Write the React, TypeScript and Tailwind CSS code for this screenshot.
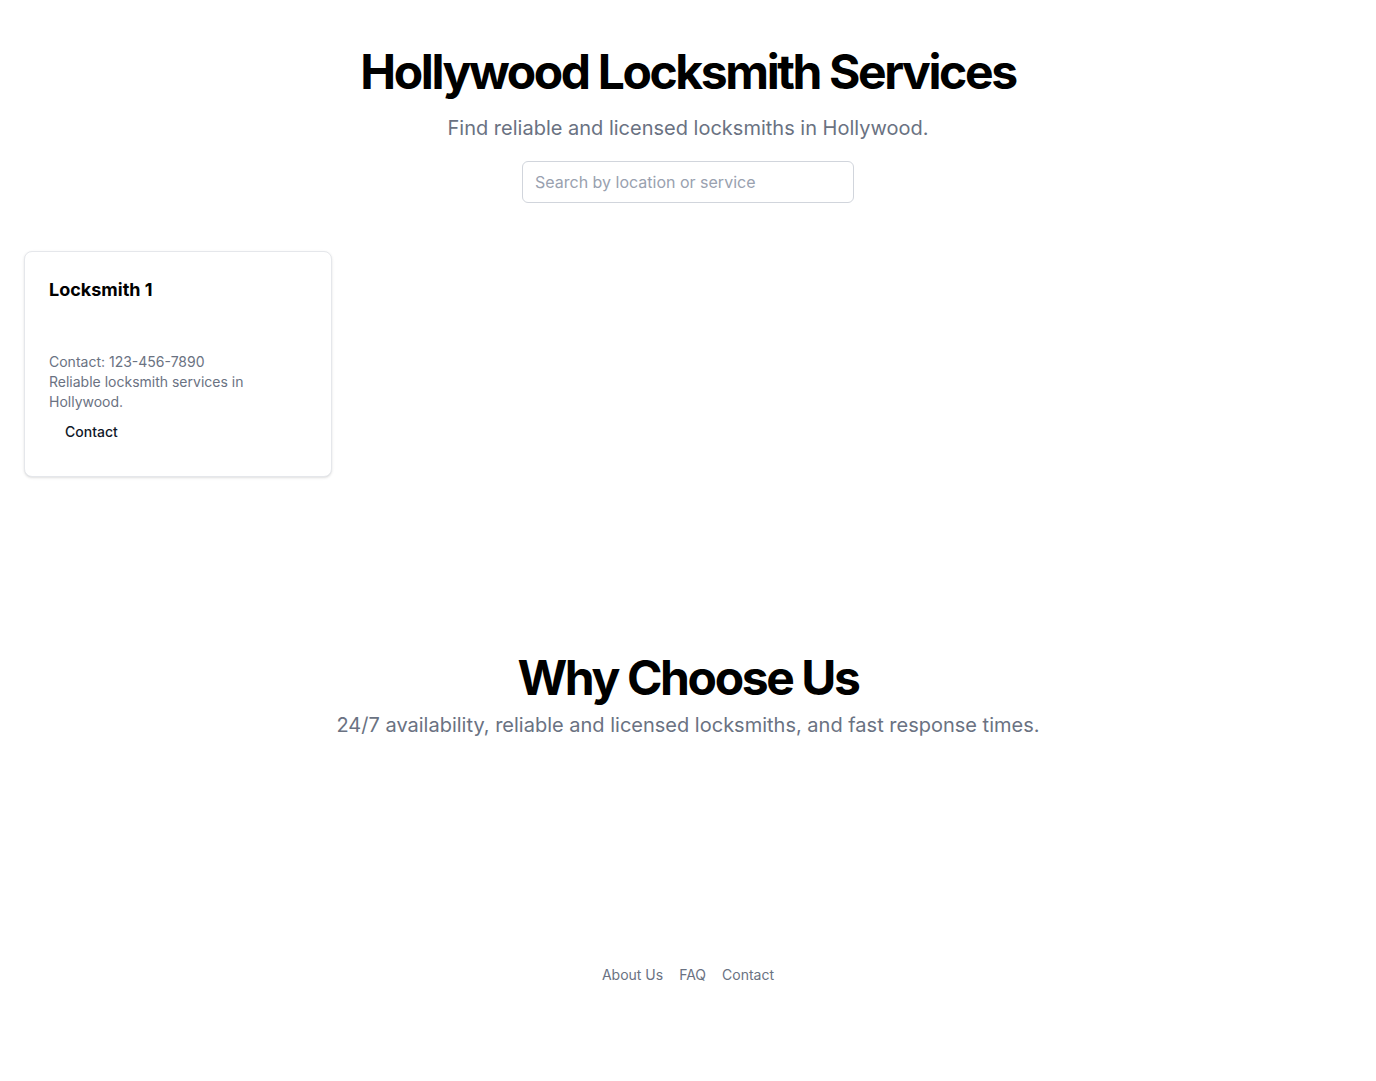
const locksmiths = [
  { name: "Locksmith 1", phone: "123-456-7890", description: "Reliable locksmith services in Hollywood." },
];

export default function App() {
  return (
    <div className="min-h-screen bg-white text-black" style={{ fontFamily: "Inter, 'Noto Sans', sans-serif" }}>
      <header className="flex flex-col items-center pt-12">
        <h1 className="text-5xl font-bold tracking-tighter">Hollywood Locksmith Services</h1>
        <p className="mt-[18px] text-xl text-gray-500">Find reliable and licensed locksmiths in Hollywood.</p>
        <input
          type="text"
          placeholder="Search by location or service"
          className="mt-[19px] h-[42px] w-[332px] rounded-md border border-gray-300 px-3 text-base placeholder:text-gray-400 outline-none"
        />
      </header>

      <main className="grid grid-cols-4 gap-8 px-6 pt-12">
        {locksmiths.map((l) => (
          <div key={l.name} className="rounded-lg border border-gray-200 bg-white p-6 shadow-sm">
            <h3 className="text-lg font-bold leading-7">{l.name}</h3>
            <div className="mt-[48px] text-sm text-gray-500">
              <p>Contact: {l.phone}</p>
              <p className="pr-12">{l.description}</p>
            </div>
            <button className="h-10 px-4 text-sm font-medium text-gray-900">Contact</button>
          </div>
        ))}
      </main>

      <section className="mt-[177px] flex flex-col items-center">
        <h2 className="text-5xl font-bold tracking-tighter">Why Choose Us</h2>
        <p className="mt-[9px] text-xl text-gray-500">24/7 availability, reliable and licensed locksmiths, and fast response times.</p>
      </section>

      <footer className="mt-[226px] flex justify-center gap-4 text-sm text-gray-500">
        <a href="#">About Us</a>
        <a href="#">FAQ</a>
        <a href="#">Contact</a>
      </footer>
    </div>
  );
}
